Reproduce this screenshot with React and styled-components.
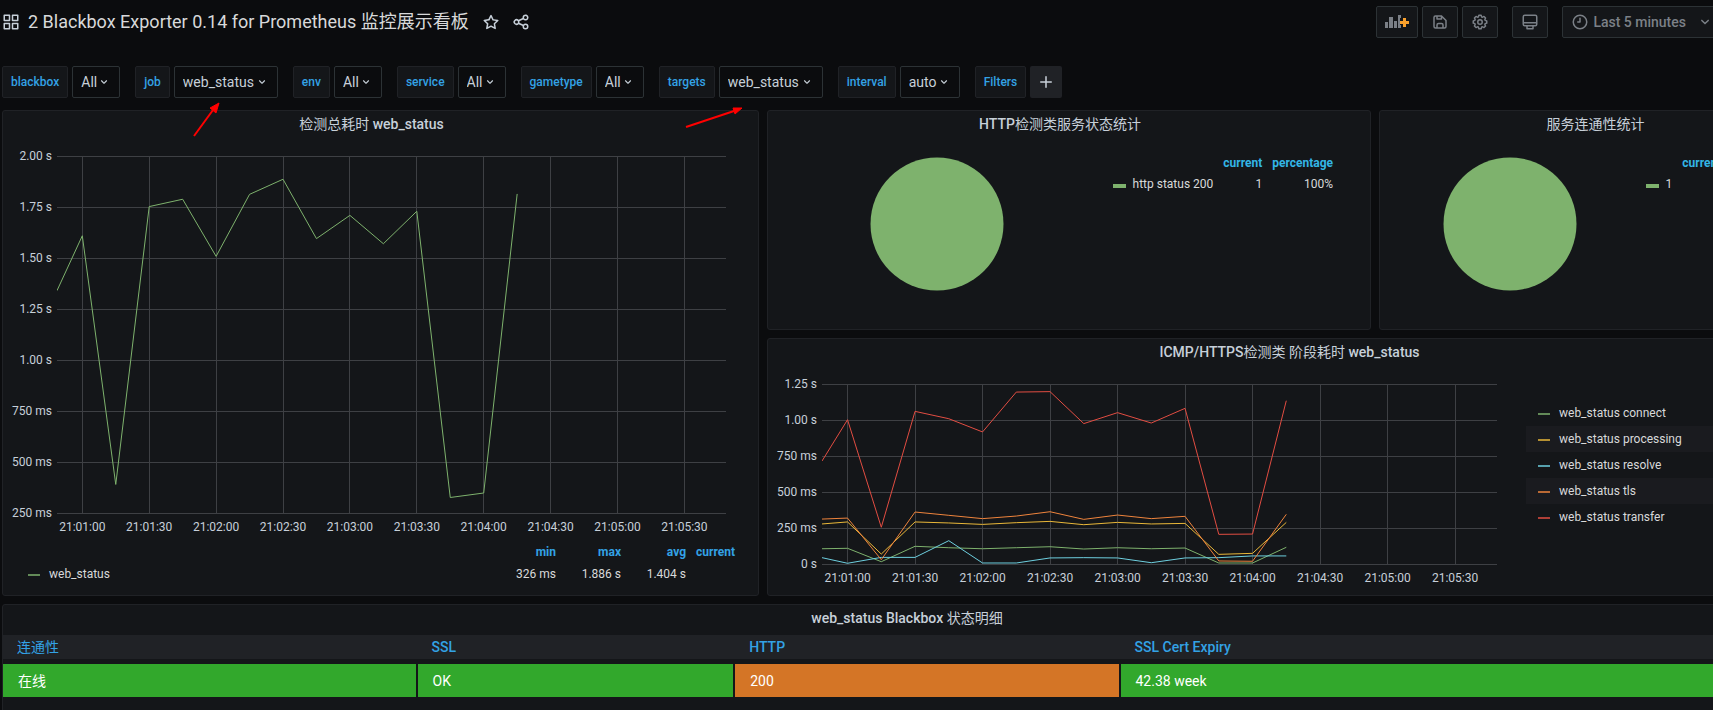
import styled, { createGlobalStyle } from "styled-components";

const GlobalStyle = createGlobalStyle`
  :root {
    --color-body: #0b0c0e;
    --color-panel: #141619;
    --color-border: #202226;
    --color-border-strong: #2c3235;
    --color-text: #c7d0d9;
    --color-text-strong: #d8d9da;
    --color-text-weak: #7b8087;
    --color-blue: #33a2e5;
  }

  *, *::before, *::after {
    box-sizing: border-box;
  }

  body {
    margin: 0;
    height: 100vh;
    overflow: hidden;
    background-color: var(--color-body);
    color: var(--color-text);
    font-family: Roboto, "Noto Sans CJK SC", sans-serif;
    font-size: 14px;
    line-height: 20px;
  }

  button, select {
    font: inherit;
    margin: 0;
  }
`;

// The dashboard runs a little past the right edge of the window
const Page = styled.div`
  position: relative;
  width: calc(100% + 117px);
`;

const Navbar = styled.header`
  display: flex;
  align-items: center;
  height: 44px;
  padding: 0 107px 0 2px;
`;

const Title = styled.h1`
  margin: 0 7px 0 8px;
  font-size: 18px;
  font-weight: 400;
  line-height: 24px;
  color: var(--color-text-strong);
`;

const IconButton = styled.button`
  display: flex;
  padding: 0 6px;
  border: 0;
  background: none;
  color: var(--color-text);
`;

const NavActions = styled.div`
  display: flex;
  gap: 14px;
  margin-left: auto;
`;

const ButtonGroup = styled.div`
  display: flex;
  gap: 4px;
`;

const NavButton = styled.button`
  display: flex;
  align-items: center;
  justify-content: center;
  gap: 4px;
  height: 32px;
  min-width: 36px;
  padding: 0 8px;
  border: 1px solid var(--color-border-strong);
  border-radius: 2px;
  background-color: var(--color-panel);
  color: var(--color-text-weak);
  font-weight: 500;
`;

const TimeLabel = styled.span`
  margin-right: 6px;
`;

const Submenu = styled.div`
  display: flex;
  gap: 15px;
  padding: 22px 2px 12px;
`;

const Variable = styled.div`
  display: flex;
  gap: 4px;
`;

const VariableLabel = styled.label`
  display: flex;
  align-items: center;
  height: 32px;
  padding: 0 8px;
  border: 1px solid var(--color-border);
  border-radius: 2px;
  background-color: var(--color-panel);
  color: var(--color-blue);
  font-size: 12px;
  font-weight: 500;
`;

const SelectBox = styled.span`
  display: grid;
  align-items: center;

  select,
  svg {
    grid-area: 1 / 1;
  }

  svg {
    justify-self: end;
    margin-right: 9px;
    pointer-events: none;
  }
`;

const Select = styled.select`
  appearance: none;
  height: 32px;
  padding: 0 22px 0 8px;
  border: 1px solid var(--color-border-strong);
  border-radius: 2px;
  background-color: var(--color-body);
  color: var(--color-text);
`;

const AddFilter = styled.button`
  display: flex;
  align-items: center;
  justify-content: center;
  width: 32px;
  height: 32px;
  padding: 0;
  border: 0;
  border-radius: 2px;
  background-color: var(--color-border);
  color: var(--color-text);
`;

const Dashboard = styled.main`
  display: grid;
  grid-template-columns: repeat(24, minmax(0, 1fr));
  grid-auto-rows: 30px;
  gap: 8px;
  padding-left: 2px;
`;

const Panel = styled.section`
  display: flex;
  flex-direction: column;
  grid-column: span ${(props) => props.$cols};
  grid-row: span ${(props) => props.$rows};
  border: 1px solid var(--color-border);
  border-radius: 3px;
  background-color: var(--color-panel);
`;

const PanelTitle = styled.h2`
  margin: 0;
  padding: 3px 18px 3px 0;
  font-size: 14px;
  font-weight: 500;
  line-height: 20px;
  text-align: center;
`;

// Chinese text stays at the regular weight inside medium headings
const Han = styled.span`
  font-weight: 400;
`;

const PanelBody = styled.div`
  display: flex;
  flex: 1;
`;

const PlotArea = styled.div`
  flex: 1;
  padding: ${(props) => props.$padding};
`;

const PlotSvg = styled.svg`
  display: block;
  width: 100%;
  overflow: visible;

  text {
    fill: var(--color-text);
    font-size: 12px;
  }
`;

const SeriesLine = styled.polyline`
  fill: none;
  stroke: ${(props) => props.$color};
  stroke-width: 1px;
  vector-effect: non-scaling-stroke;
`;

const Dash = styled.span`
  display: inline-block;
  width: ${(props) => (props.$thick ? 13 : 12)}px;
  height: ${(props) => props.$thick || 2}px;
  margin-right: ${(props) => props.$gap || 9}px;
  vertical-align: ${(props) => (props.$thick ? "baseline" : "middle")};
  background-color: ${(props) => props.$color};
  opacity: ${(props) => (props.$thick ? 1 : 0.75)};
`;

const StatsTable = styled.table`
  width: calc(100% - 40px);
  margin: 0 0 10px 17px;
  border-collapse: collapse;
  table-layout: fixed;
  font-size: 12px;
  color: var(--color-text-strong);

  th,
  td {
    width: 65px;
    padding: 1px 0;
    text-align: right;
  }

  th {
    color: var(--color-blue);
  }

  th:first-child,
  td:first-child {
    width: auto;
    padding-left: 8px;
    text-align: left;
    font-weight: 400;
    color: inherit;
  }

  th:last-child {
    width: 49px;
  }
`;

const SideLegend = styled.ul`
  width: 295px;
  margin: 35px 8px 0 0;
  padding: 0;
  list-style: none;
  font-size: 12px;
  color: var(--color-text-strong);
`;

const LegendRow = styled.li`
  height: 26px;
  padding-left: 12px;
  line-height: 26px;

  &:nth-child(even) {
    background-color: #1a1b1f;
  }
`;

const PieArea = styled.div`
  display: flex;
  flex: 1;
  justify-content: center;
  padding-top: 20px;
`;

const PieLegend = styled.table`
  align-self: flex-start;
  margin: 15px 37px 0 6px;
  border-collapse: collapse;
  font-size: 12px;
  color: var(--color-text-strong);

  th,
  td {
    height: 21px;
    padding: 0 0 0 10px;
    text-align: right;
    white-space: nowrap;
  }

  th:first-child,
  td:first-child {
    padding-left: 0;
    font-weight: 400;
  }

  thead th {
    color: #33b5e5;
  }
`;

const StatusTable = styled.table`
  width: 100%;
  border-spacing: 0;
  table-layout: fixed;
  margin-top: 4px;

  th {
    height: 24px;
    padding: 0 14px;
    background-color: var(--color-border);
    color: var(--color-blue);
    font-weight: 500;
    text-align: left;
  }
`;

const StatusColumn = styled.col`
  width: ${(props) => props.$width};
`;

const StatusCell = styled.td`
  height: 38px;
  padding: 0 15px;
  border-top: 5px solid var(--color-panel);
  border-right: 2px solid var(--color-panel);
  background-color: ${(props) => (props.$warning ? "#d47526" : "#32a82c")};
  background-clip: padding-box;
  color: #fff;
`;

const Annotations = styled.svg`
  position: absolute;
  top: 0;
  left: 0;
  pointer-events: none;
`;

const icons = {
  apps: "M10,13H3a1,1,0,0,0-1,1v7a1,1,0,0,0,1,1h7a1,1,0,0,0,1-1V14A1,1,0,0,0,10,13ZM9,20H4V15H9ZM21,2H14a1,1,0,0,0-1,1v7a1,1,0,0,0,1,1h7a1,1,0,0,0,1-1V3A1,1,0,0,0,21,2ZM20,9H15V4h5Zm1,4H14a1,1,0,0,0-1,1v7a1,1,0,0,0,1,1h7a1,1,0,0,0,1-1V14A1,1,0,0,0,21,13Zm-1,7H15V15h5ZM10,2H3A1,1,0,0,0,2,3v7a1,1,0,0,0,1,1h7a1,1,0,0,0,1-1V3A1,1,0,0,0,10,2ZM9,9H4V4H9Z",
  star: "M22,9.67A1,1,0,0,0,21.14,9l-5.69-.83L12.9,3a1,1,0,0,0-1.8,0L8.55,8.16,2.86,9a1,1,0,0,0-.81.68,1,1,0,0,0,.25,1l4.13,4-1,5.68A1,1,0,0,0,6.9,21.44L12,18.77l5.1,2.67a.93.93,0,0,0,.46.12,1,1,0,0,0,.59-.19,1,1,0,0,0,.4-1l-1-5.68,4.13-4A1,1,0,0,0,22,9.67Zm-6.15,4a1,1,0,0,0-.29.88l.72,4.2-3.76-2a1.06,1.06,0,0,0-.94,0l-3.76,2,.72-4.2a1,1,0,0,0-.29-.88l-3-3,4.21-.61a1,1,0,0,0,.76-.55L12,5.7l1.88,3.82a1,1,0,0,0,.76.55l4.21.61Z",
  share:
    "M18,14a4,4,0,0,0-3.08,1.48l-5.1-2.35a3.64,3.64,0,0,0,0-2.26l5.1-2.35A4,4,0,1,0,14,6a4.17,4.17,0,0,0,.07.71L8.79,9.14a4,4,0,1,0,0,5.72l5.28,2.43A4.17,4.17,0,0,0,14,18a4,4,0,1,0,4-4ZM18,4a2,2,0,1,1-2,2A2,2,0,0,1,18,4ZM6,14a2,2,0,1,1,2-2A2,2,0,0,1,6,14Zm12,6a2,2,0,1,1,2-2A2,2,0,0,1,18,20Z",
  save: "M20.71,9.29l-6-6a1,1,0,0,0-.32-.21A1.09,1.09,0,0,0,14,3H6A3,3,0,0,0,3,6V18a3,3,0,0,0,3,3H18a3,3,0,0,0,3-3V10A1,1,0,0,0,20.71,9.29ZM9,5h4V7H9Zm6,14H9V16a1,1,0,0,1,1-1h4a1,1,0,0,1,1,1Zm4-1a1,1,0,0,1-1,1H17V16a3,3,0,0,0-3-3H10a3,3,0,0,0-3,3v3H6a1,1,0,0,1-1-1V6A1,1,0,0,1,6,5H7V8A1,1,0,0,0,8,9h6a1,1,0,0,0,1-1V6.41l4,4Z",
  cog: "M21.32,9.55l-1.89-.63.89-1.78A1,1,0,0,0,20.13,6L18,3.87a1,1,0,0,0-1.15-.19l-1.78.89-.63-1.89A1,1,0,0,0,13.5,2h-3a1,1,0,0,0-.95.68L8.92,4.57,7.14,3.68A1,1,0,0,0,6,3.87L3.87,6a1,1,0,0,0-.19,1.15l.89,1.78-1.89.63A1,1,0,0,0,2,10.5v3a1,1,0,0,0,.68.95l1.89.63-.89,1.78A1,1,0,0,0,3.87,18L6,20.13a1,1,0,0,0,1.15.19l1.78-.89.63,1.89a1,1,0,0,0,.95.68h3a1,1,0,0,0,.95-.68l.63-1.89,1.78.89A1,1,0,0,0,18,20.13L20.13,18a1,1,0,0,0,.19-1.15l-.89-1.78,1.89-.63A1,1,0,0,0,22,13.5v-3A1,1,0,0,0,21.32,9.55ZM20,12.78l-1.2.4A2,2,0,0,0,17.64,16l.57,1.14-1.1,1.1L16,17.64a2,2,0,0,0-2.79,1.16l-.4,1.2H11.22l-.4-1.2A2,2,0,0,0,8,17.64l-1.14.57-1.1-1.1L6.36,16A2,2,0,0,0,5.2,13.18L4,12.78V11.22l1.2-.4A2,2,0,0,0,6.36,8L5.79,6.89l1.1-1.1L8,6.36A2,2,0,0,0,10.82,5.2l.4-1.2h1.56l.4,1.2A2,2,0,0,0,16,6.36l1.14-.57,1.1,1.1L17.64,8a2,2,0,0,0,1.16,2.79l1.2.4ZM12,8a4,4,0,1,0,4,4A4,4,0,0,0,12,8Zm0,6a2,2,0,1,1,2-2A2,2,0,0,1,12,14Z",
  monitor:
    "M19,2H5A3,3,0,0,0,2,5V15a3,3,0,0,0,3,3H7v3a1,1,0,0,0,1,1h8a1,1,0,0,0,1-1V18h2a3,3,0,0,0,3-3V5A3,3,0,0,0,19,2ZM15,20H9V18h6Zm5-5a1,1,0,0,1-1,1H5a1,1,0,0,1-1-1V14H20Zm0-3H4V5A1,1,0,0,1,5,4H19a1,1,0,0,1,1,1Z",
  clock:
    "M12,2A10,10,0,1,0,22,12,10,10,0,0,0,12,2Zm0,18a8,8,0,1,1,8-8A8,8,0,0,1,12,20ZM12,6a1,1,0,0,0-1,1v4H9a1,1,0,0,0,0,2h3a1,1,0,0,0,1-1V7A1,1,0,0,0,12,6Z",
  angleDown:
    "M17,9.17a1,1,0,0,0-1.41,0L12,12.71,8.46,9.17a1,1,0,0,0-1.41,0,1,1,0,0,0,0,1.42l4.24,4.24a1,1,0,0,0,1.42,0L17,10.59A1,1,0,0,0,17,9.17Z",
  plus: "M19,11H13V5a1,1,0,0,0-2,0v6H5a1,1,0,0,0,0,2h6v6a1,1,0,0,0,2,0V13h6a1,1,0,0,0,0-2Z",
};

const variables = [
  { name: "blackbox", value: "All" },
  { name: "job", value: "web_status" },
  { name: "env", value: "All" },
  { name: "service", value: "All" },
  { name: "gametype", value: "All" },
  { name: "targets", value: "web_status" },
  { name: "interval", value: "auto" },
];

// The window covers 300s and starts 11.35s before 21:01:00
const RANGE = 300;
const FIRST_TICK = 11.35;

const timeTicks = [
  "21:01:00",
  "21:01:30",
  "21:02:00",
  "21:02:30",
  "21:03:00",
  "21:03:30",
  "21:04:00",
  "21:04:30",
  "21:05:00",
  "21:05:30",
];

const totalSeries = [
  {
    name: "web_status",
    color: "#7eb26d",
    values: [
      1.34, 1.609, 0.39, 1.752, 1.788, 1.508, 1.812, 1.886, 1.595, 1.709, 1.57,
      1.729, 0.326, 0.348, 1.814,
    ],
  },
];

const phaseSeries = [
  {
    name: "web_status connect",
    color: "#7eb26d",
    values: [
      0.106, 0.109, 0.016, 0.123, 0.113, 0.106, 0.113, 0.12, 0.104, 0.113,
      0.106, 0.111, 0.007, 0.007, 0.116,
    ],
  },
  {
    name: "web_status processing",
    color: "#eab839",
    values: [
      0.278, 0.292, 0.069, 0.292, 0.285, 0.275, 0.287, 0.296, 0.273, 0.289,
      0.278, 0.282, 0.067, 0.074, 0.289,
    ],
  },
  {
    name: "web_status resolve",
    color: "#6ed0e0",
    values: [
      0.044, 0.005, 0.046, 0.046, 0.162, 0.007, 0.007, 0.042, 0.044, 0.042,
      0.009, 0.042, 0.044, 0.056, 0.056,
    ],
  },
  {
    name: "web_status tls",
    color: "#ef843c",
    values: [
      0.312, 0.319, 0.03, 0.361, 0.338, 0.315, 0.333, 0.363, 0.31, 0.34, 0.315,
      0.331, 0.021, 0.019, 0.345,
    ],
  },
  {
    name: "web_status transfer",
    color: "#e24d42",
    values: [
      0.715, 1.002, 0.255, 1.06, 1.009, 0.917, 1.194, 1.197, 0.975, 1.051,
      0.979, 1.081, 0.206, 0.208, 1.134,
    ],
  },
];

function Icon({ name, size = 18 }) {
  return (
    <svg width={size} height={size} viewBox="0 0 24 24" fill="currentColor">
      <path d={icons[name]} />
    </svg>
  );
}

function AddPanelIcon() {
  return (
    <svg width="24" height="16" viewBox="0 0 24 16" fill="currentColor">
      <path d="M0 8h3v6H0zM4 3h4v11H4zM9 7h3v7H9zM13 1h3v3h-1v7h1v3h-3z" />
      <path d="M18 4h3v3h3v3h-3v3h-3v-3h-3V7h3z" fill="#f9a12d" />
    </svg>
  );
}

function Plot({ series, labels, min, max, height }) {
  const step = height / (labels.length - 1);
  const tickX = (i) => `${((FIRST_TICK + i * 30) / RANGE) * 100}%`;

  const points = (values) =>
    values
      .map((value, i) => {
        const x = i === 0 ? 0 : FIRST_TICK + (i - 1) * 15;
        const y = ((max - value) / (max - min)) * height;
        return `${x},${y}`;
      })
      .join(" ");

  return (
    <PlotSvg height={height}>
      <g stroke="#3e4044" shapeRendering="crispEdges">
        {labels.map((label, i) => (
          <line key={label} x1="0" x2="100%" y1={i * step} y2={i * step} />
        ))}
        {timeTicks.map((tick, i) => (
          <line key={tick} x1={tickX(i)} x2={tickX(i)} y1="0" y2={height} />
        ))}
      </g>
      {labels.map((label, i) => (
        <text key={label} x="-5" y={i * step + 4} textAnchor="end">
          {label}
        </text>
      ))}
      {timeTicks.map((tick, i) => (
        <text key={tick} x={tickX(i)} y={height + 18} textAnchor="middle">
          {tick}
        </text>
      ))}
      <svg
        width="100%"
        height={height}
        viewBox={`0 0 ${RANGE} ${height}`}
        preserveAspectRatio="none"
      >
        {series.map((item) => (
          <SeriesLine
            key={item.name}
            $color={item.color}
            points={points(item.values)}
          />
        ))}
      </svg>
    </PlotSvg>
  );
}

function PiePanel({ title, cols, label }) {
  return (
    <Panel $cols={cols} $rows={6}>
      <PanelTitle>{title}</PanelTitle>
      <PanelBody>
        <PieArea>
          <svg width="134" height="134" viewBox="0 0 134 134">
            <circle cx="67" cy="67" r="66.5" fill="#7eb26d" />
          </svg>
        </PieArea>
        <PieLegend>
          <thead>
            <tr>
              <td />
              <th>current</th>
              <th>percentage</th>
            </tr>
          </thead>
          <tbody>
            <tr>
              <th>
                <Dash $color="#7eb26d" $thick={4} $gap={7} />
                {label}
              </th>
              <td>1</td>
              <td>100%</td>
            </tr>
          </tbody>
        </PieLegend>
      </PanelBody>
    </Panel>
  );
}

function App() {
  return (
    <>
      <GlobalStyle />
      <Page>
        <Navbar>
          <Icon name="apps" />
          <Title>2 Blackbox Exporter 0.14 for Prometheus 监控展示看板</Title>
          <IconButton aria-label="Mark as favorite">
            <Icon name="star" />
          </IconButton>
          <IconButton aria-label="Share dashboard">
            <Icon name="share" />
          </IconButton>
          <NavActions>
            <ButtonGroup>
              <NavButton aria-label="Add panel">
                <AddPanelIcon />
              </NavButton>
              <NavButton aria-label="Save dashboard">
                <Icon name="save" />
              </NavButton>
              <NavButton aria-label="Dashboard settings">
                <Icon name="cog" />
              </NavButton>
            </ButtonGroup>
            <NavButton aria-label="Cycle view mode">
              <Icon name="monitor" />
            </NavButton>
            <NavButton>
              <Icon name="clock" />
              <TimeLabel>Last 5 minutes</TimeLabel>
              <Icon name="angleDown" />
            </NavButton>
          </NavActions>
        </Navbar>

        <Submenu>
          {variables.map(({ name, value }) => (
            <Variable key={name}>
              <VariableLabel htmlFor={`var-${name}`}>{name}</VariableLabel>
              <SelectBox>
                <Select id={`var-${name}`} defaultValue={value}>
                  <option>{value}</option>
                </Select>
                <Icon name="angleDown" size={14} />
              </SelectBox>
            </Variable>
          ))}
          <Variable>
            <VariableLabel htmlFor="add-filter">Filters</VariableLabel>
            <AddFilter id="add-filter">
              <Icon name="plus" />
            </AddFilter>
          </Variable>
        </Submenu>

        <Dashboard>
          <Panel $cols={10} $rows={13}>
            <PanelTitle>
              <Han>检测总耗时</Han> web_status
            </PanelTitle>
            <PanelBody>
              <PlotArea $padding="19px 32px 0 54px">
                <Plot
                  series={totalSeries}
                  labels={[
                    "2.00 s",
                    "1.75 s",
                    "1.50 s",
                    "1.25 s",
                    "1.00 s",
                    "750 ms",
                    "500 ms",
                    "250 ms",
                  ]}
                  min={0.25}
                  max={2}
                  height={357}
                />
              </PlotArea>
            </PanelBody>
            <StatsTable>
              <thead>
                <tr>
                  <td />
                  <th>min</th>
                  <th>max</th>
                  <th>avg</th>
                  <th>current</th>
                </tr>
              </thead>
              <tbody>
                <tr>
                  <th>
                    <Dash $color="#7eb26d" />
                    web_status
                  </th>
                  <td>326 ms</td>
                  <td>1.886 s</td>
                  <td>1.404 s</td>
                  <td />
                </tr>
              </tbody>
            </StatsTable>
          </Panel>

          <PiePanel
            title={
              <>
                HTTP<Han>检测类服务状态统计</Han>
              </>
            }
            cols={8}
            label="http status 200"
          />
          <PiePanel title={<Han>服务连通性统计</Han>} cols={6} label="1" />

          <Panel $cols={14} $rows={7}>
            <PanelTitle>
              ICMP/HTTPS<Han>检测类 阶段耗时</Han> web_status
            </PanelTitle>
            <PanelBody>
              <PlotArea $padding="19px 29px 0 54px">
                <Plot
                  series={phaseSeries}
                  labels={[
                    "1.25 s",
                    "1.00 s",
                    "750 ms",
                    "500 ms",
                    "250 ms",
                    "0 s",
                  ]}
                  min={0}
                  max={1.25}
                  height={180}
                />
              </PlotArea>
              <SideLegend>
                {phaseSeries.map((item) => (
                  <LegendRow key={item.name}>
                    <Dash $color={item.color} />
                    {item.name}
                  </LegendRow>
                ))}
              </SideLegend>
            </PanelBody>
          </Panel>

          <Panel $cols={24} $rows={6}>
            <PanelTitle>
              web_status Blackbox <Han>状态明细</Han>
            </PanelTitle>
            <StatusTable>
              <colgroup>
                <StatusColumn $width="22.7%" />
                <StatusColumn $width="17.4%" />
                <StatusColumn $width="21.1%" />
                <StatusColumn $width="auto" />
              </colgroup>
              <thead>
                <tr>
                  <th>
                    <Han>连通性</Han>
                  </th>
                  <th>SSL</th>
                  <th>HTTP</th>
                  <th>SSL Cert Expiry</th>
                </tr>
              </thead>
              <tbody>
                <tr>
                  <StatusCell>在线</StatusCell>
                  <StatusCell>OK</StatusCell>
                  <StatusCell $warning>200</StatusCell>
                  <StatusCell>42.38 week</StatusCell>
                </tr>
              </tbody>
            </StatusTable>
          </Panel>
        </Dashboard>

        <Annotations width="800" height="150" fill="#f00" stroke="#f00">
          <path d="M194 136L213 110" strokeWidth="2" />
          <path d="M219 103L216 113L210 108Z" strokeWidth="1" />
          <path d="M686 127L734 111" strokeWidth="2" />
          <path d="M742 108L735 114L733 108Z" strokeWidth="1" />
        </Annotations>
      </Page>
    </>
  );
}

export default App;
